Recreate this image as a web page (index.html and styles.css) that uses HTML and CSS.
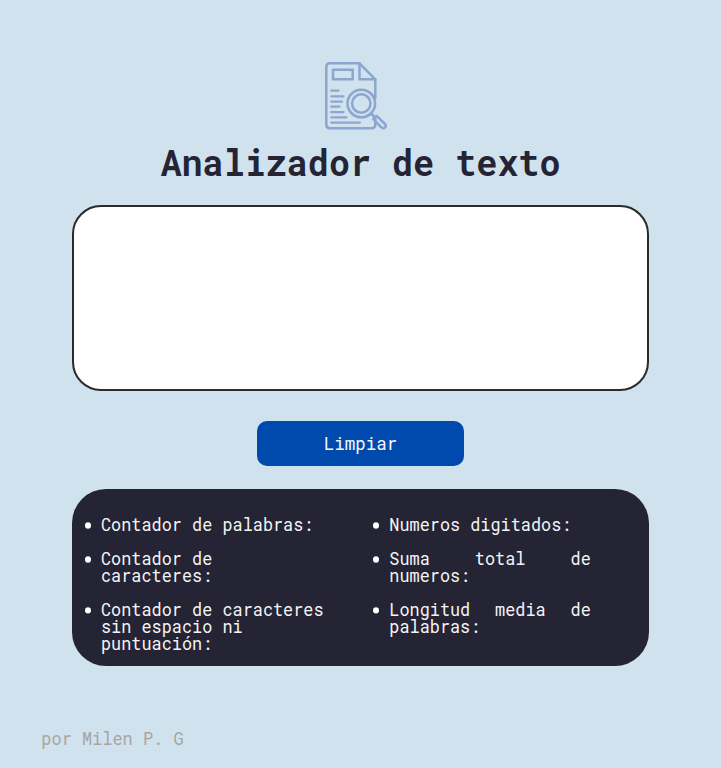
FILE: index.html
```html
<!DOCTYPE html>
<html lang="es">
<head>
<meta charset="utf-8">
<title>Analizador de texto</title>
<link rel="stylesheet" href="styles.css">
</head>
<body>
<header class="header">
  <svg class="logo" viewBox="0 0 66 70" fill="none" stroke="#8ca6d0" stroke-width="2.5" stroke-linecap="round" stroke-linejoin="round" aria-hidden="true">
    <path d="M52.300 38V19.300L36.500 3.300H7Q3.300 3.300 3.300 7V64.500Q3.300 68.200 7 68.200H48.500Q52.300 68.200 52.300 64.500V59"/>
    <path d="M36.500 3.300V19.300H52.300"/>
    <path d="M10 9.800H29.700V19.300H10Z" stroke-linejoin="miter"/>
    <path d="M8.300 30.700H15.500M8.300 36.300H20.500M8.300 41.600H19M8.300 46.700H16.500M8.300 52.200H20.500M8.300 57.300H23.500M8.300 62.600H37" stroke-width="2.300"/>
    <circle cx="38.300" cy="43.500" r="13.800"/>
    <circle cx="38.300" cy="43.500" r="9.200"/>
    <path d="M48 53.500L51.500 57"/>
    <path d="M50.300 59.200L53.600 55.900L61.500 63.500Q64 66 62 67.500Q60 69.200 58 67Z"/>
  </svg>
  <h1 class="title">Analizador de texto</h1>
</header>
<main class="content">
  <textarea class="input" aria-label="Texto"></textarea>
  <button class="clear" type="button"><span class="label">Limpiar</span></button>
  <section class="metrics">
    <ul class="list">
      <li>Contador de palabras:</li>
      <li>Contador de caracteres:</li>
      <li>Contador de caracteres sin espacio ni puntuación:</li>
    </ul>
    <ul class="list justified">
      <li>Numeros digitados:</li>
      <li>Suma total de numeros:</li>
      <li>Longitud media de palabras:</li>
    </ul>
  </section>
</main>
<footer class="footer">por Milen P. G</footer>
</body>
</html>
```
FILE: styles.css
```css
* { box-sizing: border-box; }
body {
  margin: 0;
  height: 768px;
  overflow: hidden;
  background: #d0e2ed;
  color: #252434;
  font-family: "Roboto Mono", "DejaVu Sans Mono", monospace;
  font-weight: 400;
}
.header {
  display: flex;
  flex-direction: column;
  align-items: center;
  height: 205.4px;
  padding-top: 60px;
}
.logo { width: 66px; height: 70px; margin-right: 10px; }
.title {
  margin: 9px 0 0;
  font-size: 35.1px;
  line-height: 46px;
  font-weight: 700;
  white-space: nowrap;
  transform: scaleY(1.04);
}
.content {
  display: flex;
  flex-direction: column;
  align-items: center;
  width: 577px;
  margin: 0 auto;
}
.input {
  display: block;
  width: 577px;
  height: 186px;
  padding: 20px;
  resize: none;
  border: 2px solid #2b2b2b;
  border-radius: 29px;
  background: #fff;
  font: inherit;
}
.clear {
  width: 207px;
  height: 45px;
  margin-top: 29.600px;
  padding: 0;
  border: 0;
  border-radius: 10px;
  background: #004aad;
  color: #f4f6fa;
  font-family: inherit;
  font-size: 17.5px;
}
.label { display: block; transform: scaleY(1.04); }
.metrics {
  display: grid;
  grid-template-columns: 288.300px 1fr;
  width: 577px;
  height: 177.500px;
  margin-top: 22.600px;
  padding: 27.200px 0 0 29px;
  border-radius: 34px;
  background: #252434;
  color: #f4f4f5;
}
.list {
  display: flex;
  flex-direction: column;
  gap: 16px;
  width: 226px;
  margin: 0;
  padding: 0;
  list-style: none;
  font-size: 16.88px;
  line-height: 16px;
  transform: scaleY(1.06);
  transform-origin: top;
}
.list li { position: relative; }
.list li::before {
  content: "";
  position: absolute;
  left: -16px;
  top: 5.500px;
  width: 6px;
  height: 6px;
  border-radius: 50%;
  background: #fff;
}
.justified { width: 201.500px; text-align: justify; }
.footer {
  margin: 61.500px 0 0 41.300px;
  font-size: 16.95px;
  line-height: 22px;
  color: #a6a6a6;
  transform: scaleY(1.03);
}
```
